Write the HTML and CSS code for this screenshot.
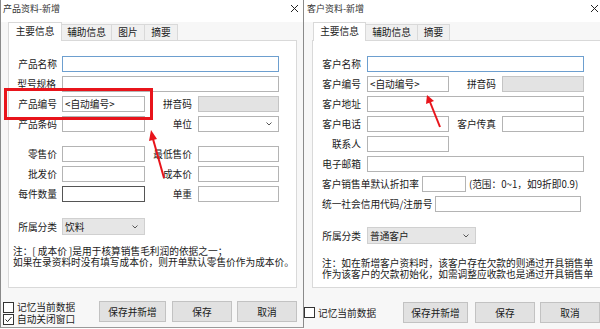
FILE: index.html
```html
<!DOCTYPE html>
<html lang="zh-CN">
<head>
    <meta charset="UTF-8">
    <title>产品资料 / 客户资料</title>
    <link rel="stylesheet" href="styles.css">
</head>
<body>

<div class="window win-product">
    <div class="titlebar">
        <span class="title">产品资料-新增</span>
        <svg class="close" width="7" height="7" viewBox="0 0 7 7"><path d="M0 0L7 7M7 0L0 7" stroke="#222" stroke-width="1"/></svg>
    </div>
    <div class="tabs">
        <span class="tab active w54">主要信息</span>
        <span class="tab w50">辅助信息</span>
        <span class="tab w33">图片</span>
        <span class="tab w33">摘要</span>
    </div>
    <div class="panel">
        <div class="form-grid grid-product">
            <label class="lbl">产品名称</label>
            <div class="field focus span3"></div>

            <label class="lbl">型号规格</label>
            <div class="field span3"></div>

            <label class="lbl">产品编号</label>
            <div class="field">&lt;自动编号&gt;</div>
            <label class="lbl">拼音码</label>
            <div class="field disabled"></div>

            <label class="lbl">产品条码</label>
            <div class="field"></div>
            <label class="lbl">单位</label>
            <div class="field select"><span></span><svg width="6" height="4" viewBox="0 0 6 4"><path d="M0.5 0.5L3 3L5.5 0.5" fill="none" stroke="#555"/></svg></div>

            <label class="lbl gap-top">零售价</label>
            <div class="field gap-top"></div>
            <label class="lbl gap-top">最低售价</label>
            <div class="field gap-top"></div>

            <label class="lbl">批发价</label>
            <div class="field"></div>
            <label class="lbl">成本价</label>
            <div class="field"></div>

            <label class="lbl">每件数量</label>
            <div class="field dark"></div>
            <label class="lbl">单重</label>
            <div class="field"></div>

            <label class="lbl cat-top">所属分类</label>
            <div class="field select gray cat-top"><span>饮料</span><svg width="6" height="4" viewBox="0 0 6 4"><path d="M0.5 0.5L3 3L5.5 0.5" fill="none" stroke="#555"/></svg></div>
        </div>
        <p class="note note-product">注：[ 成本价 ]是用于核算销售毛利润的依据之一；<br>如果在录资料时没有填写成本价，则开单默认零售价作为成本价。</p>
    </div>
    <div class="footer footer-product">
        <div class="checks">
            <div class="check"><span class="box"></span>记忆当前数据</div>
            <div class="check"><span class="box"><svg width="9" height="9" viewBox="0 0 9 9"><path d="M1.5 4.5L3.6 6.6L7.5 2" fill="none" stroke="#222" stroke-width="1"/></svg></span>自动关闭窗口</div>
        </div>
        <div class="buttons">
            <button class="btn w67">保存并新增</button>
            <button class="btn w60">保存</button>
            <button class="btn w60">取消</button>
        </div>
    </div>
</div>

<div class="window win-customer">
    <div class="titlebar">
        <span class="title">客户资料-新增</span>
        <svg class="close" width="7" height="7" viewBox="0 0 7 7"><path d="M0 0L7 7M7 0L0 7" stroke="#222" stroke-width="1"/></svg>
    </div>
    <div class="tabs">
        <span class="tab active w53">主要信息</span>
        <span class="tab w52">辅助信息</span>
        <span class="tab w32">摘要</span>
    </div>
    <div class="panel">
        <div class="form-grid grid-customer">
            <label class="lbl">客户名称</label>
            <div class="field focus span3"></div>

            <label class="lbl">客户编号</label>
            <div class="field">&lt;自动编号&gt;</div>
            <label class="lbl">拼音码</label>
            <div class="field disabled"></div>

            <label class="lbl">客户地址</label>
            <div class="field span3"></div>

            <label class="lbl">客户电话</label>
            <div class="field"></div>
            <label class="lbl">客户传真</label>
            <div class="field"></div>

            <label class="lbl">联系人</label>
            <div class="field"></div>
            <span></span><span></span>

            <label class="lbl">电子邮箱</label>
            <div class="field span3"></div>

            <div class="inline-row">
                <label>客户销售单默认折扣率</label>
                <div class="field w44"></div>
                <span>(范围：0~1，如9折即0.9)</span>
            </div>

            <div class="inline-row">
                <label>统一社会信用代码/注册号</label>
                <div class="field w146"></div>
            </div>

            <label class="lbl cat-top2">所属分类</label>
            <div class="field select gray w109 cat-top2"><span>普通客户</span><svg width="6" height="4" viewBox="0 0 6 4"><path d="M0.5 0.5L3 3L5.5 0.5" fill="none" stroke="#555"/></svg></div>
        </div>
        <p class="note note-customer">注：如在新增客户资料时，该客户存在欠款的则通过开具销售单<br>作为该客户的欠款初始化，如需调整应收款也是通过开具销售单</p>
    </div>
    <div class="footer footer-customer">
        <div class="check"><span class="box"></span>记忆当前数据</div>
        <div class="buttons">
            <button class="btn w65">保存并新增</button>
            <button class="btn w60">保存</button>
            <button class="btn w60">取消</button>
        </div>
    </div>
</div>

<!-- red annotations drawn over both dialogs -->
<svg class="marks" width="600" height="329" viewBox="0 0 600 329">
    <rect x="5.5" y="89.5" width="146" height="29" fill="none" stroke="#e8141b" stroke-width="3"/>
    <line x1="164" y1="178" x2="153" y2="139" stroke="#e8141b" stroke-width="2"/>
    <polygon points="151,130 157,139 149,141" fill="#e8141b"/>
    <line x1="440" y1="127" x2="430" y2="102" stroke="#e8141b" stroke-width="2"/>
    <polygon points="427,95 434,101 426,104" fill="#e8141b"/>
</svg>

</body>
</html>
```

FILE: styles.css
```css
html, body {
    margin: 0;
    padding: 0;
}
body {
    width: 600px;
    height: 329px;
    overflow: hidden;
    position: relative;
    display: flex;
    align-items: flex-start;
    background: #fff;
    font-family: "Noto Sans CJK SC", "Noto Sans", sans-serif;
    font-size: 9.7px;
    color: #1a1a1a;
}
.window {
    flex-shrink: 0;
    box-sizing: border-box;
    background: #f7f7f7;
}
.win-product {
    width: 304px;
    height: 328px;
    border-left: 1px solid #8a8a8a;
    border-right: 1px solid #8a8a8a;
    border-bottom: 1px solid #9a9a9a;
}
.win-customer {
    width: 300px;
    height: 329px;
}

/* title bar */
.titlebar {
    height: 22px;
    display: flex;
    align-items: flex-start;
    padding: 2px 3px 0 2px;
    box-sizing: border-box;
    background: #fff;
}
.win-customer .titlebar {
    padding-left: 3px;
}
.title {
    font-size: 9px;
    line-height: 13px;
    color: #333;
}
.close {
    margin-left: auto;
    margin-top: 3px;
    margin-right: 2px;
}
.win-customer .close {
    margin-right: 3px;
}

/* tabs */
.tabs {
    display: flex;
    align-items: flex-end;
    height: 18px;
    margin-left: 7px;
    position: relative;
    z-index: 1;
}
.win-customer .tabs {
    margin-left: 9px;
}
.tab {
    box-sizing: border-box;
    height: 16px;
    line-height: 14px;
    text-align: center;
    background: #f0f0f0;
    border: 1px solid #d9d9d9;
    border-bottom: none;
    margin-left: -1px;
}
.tab.active {
    height: 19px;
    line-height: 17px;
    background: #fff;
    margin-left: 0;
    margin-bottom: -1px;
}
.w32 { width: 33px; }
.w33 { width: 34px; }
.w50 { width: 51px; }
.w52 { width: 53px; }
.w53 { width: 53px; }
.w54 { width: 54px; }

/* tab panel */
.panel {
    box-sizing: border-box;
    width: 289px;
    height: 248px;
    margin-left: 7px;
    padding-top: 15px;
    background: #fff;
    border: 1px solid #d9d9d9;
}
.win-customer .panel {
    width: 300px;
    margin-left: 8px;
}

.form-grid {
    display: grid;
    row-gap: 4px;
    align-items: end;
}
.grid-product {
    grid-template-columns: 53px 83px 53px 81px;
}
.grid-customer {
    grid-template-columns: 54px 82px 53px 82px;
}
.lbl {
    text-align: right;
    padding-right: 5px;
    height: 16px;
    line-height: 16px;
    white-space: nowrap;
}
.grid-product .lbl:nth-of-type(even) {
    padding-right: 6px;
}
.grid-customer .lbl {
    padding-right: 6px;
}
.field {
    box-sizing: border-box;
    height: 16px;
    border: 1px solid #b4b4b4;
    background: #fff;
    line-height: 14px;
    padding-left: 2px;
    white-space: nowrap;
}
.span3 { grid-column: 2 / 5; }
.field.focus { border-color: #6d9fcf; }
.field.dark { border-color: #555; }
.field.disabled {
    background: #e3e3e3;
    border-color: #c4c4c4;
}
.field.select {
    display: flex;
    align-items: center;
    justify-content: space-between;
    padding-right: 6px;
}
.field.gray {
    height: 17px;
    background: #e6e6e6;
    border-color: #d0d0d0;
}
.gap-top { margin-top: 10px; }
.cat-top { margin-top: 12px; }
.cat-top2 { margin-top: 11px; }

.inline-row {
    grid-column: 1 / 5;
    display: flex;
    align-items: center;
    gap: 3px;
    height: 16px;
    padding-left: 9px;
    white-space: nowrap;
    line-height: 16px;
}
.w44 { width: 44px; }
.w146 { width: 146px; }
.w109 { width: 109px; }

.note {
    margin: 0;
    line-height: 11px;
    white-space: nowrap;
}
.note-product {
    margin-top: 11px;
    padding-left: 4px;
}
.note-customer {
    margin-top: 14px;
    padding-left: 9px;
}

/* footer */
.footer {
    display: flex;
    justify-content: space-between;
}
.footer-product {
    padding: 13px 6px 0 2px;
}
.footer-customer {
    padding: 14px 4px 0 0;
    align-items: center;
}
.checks {
    display: flex;
    flex-direction: column;
}
.check {
    display: flex;
    align-items: center;
    gap: 3px;
    height: 12px;
    line-height: 12px;
}
.box {
    box-sizing: border-box;
    width: 11px;
    height: 11px;
    border: 1px solid #333;
    background: #fff;
    display: flex;
    align-items: center;
    justify-content: center;
}
.buttons {
    display: flex;
    gap: 5px;
}
.footer-product .buttons .w67 { margin-right: 1px; }
.footer-customer .buttons .w65 { margin-right: 2px; }
.btn {
    box-sizing: border-box;
    height: 21px;
    padding: 0;
    font: inherit;
    color: #1a1a1a;
    background: #e1e1e1;
    border: 1px solid #c2c2c2;
}
.w60 { width: 60px; }
.w65 { width: 65px; }
.w67 { width: 67px; }

.marks {
    position: absolute;
    left: 0;
    top: 0;
    pointer-events: none;
}
```
